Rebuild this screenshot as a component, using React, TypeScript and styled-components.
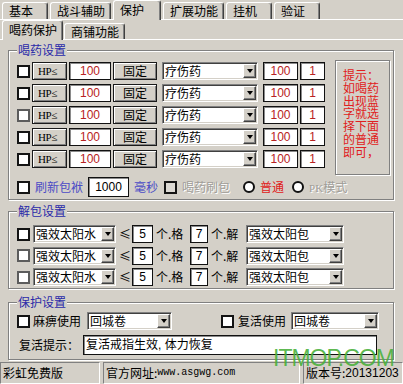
import React from 'react';
import styled, { createGlobalStyle } from 'styled-components';

const BG = '#d4d0c8';
const CJK = `"Noto Sans CJK SC", "Noto Sans", sans-serif`;
const LAT = `"Liberation Sans", "Noto Sans CJK SC", sans-serif`;

const GlobalStyle = createGlobalStyle`
  html, body { margin: 0; padding: 0; background: ${BG}; }
  body { font-family: ${CJK}; font-size: 12px; }
  *, *::before, *::after { box-sizing: border-box; }
`;

const Window = styled.div`
  position: relative;
  width: 403px;
  height: 384px;
  overflow: hidden;
  background: ${BG};
  display: flex;
  flex-direction: column;
  font-family: ${CJK};
  font-size: 12px;
  color: #000;
`;

const TabStrip = styled.div<{ $gap: number }>`
  position: relative;
  z-index: 1;
  flex: none;
  display: flex;
  align-items: flex-end;
  height: 19px;
  padding-left: 2px;
  gap: ${(p) => p.$gap}px;
`;

const Tab = styled.div<{ $active?: boolean; $h: number }>`
  flex: none;
  height: ${(p) => (p.$active ? 20 : p.$h)}px;
  margin-bottom: ${(p) => (p.$active ? -1 : 0)}px;
  min-width: ${(p) => (p.$active ? 48 : 46)}px;
  padding: 0 5px ${(p) => (p.$active ? 2 : 0)}px 6px;
  display: flex;
  align-items: center;
  background: ${BG};
  border-top: 1px solid #fff;
  border-left: 1px solid #fff;
  border-right: 1px solid #404040;
  box-shadow: inset -1px 0 0 #808080;
  border-radius: 3px 3px 0 0;
  line-height: 14px;
  white-space: nowrap;
`;

const TabPanel = styled.div`
  flex: 1;
  display: flex;
  flex-direction: column;
  border-top: 1px solid #fff;
  min-height: 0;
`;

const PanelBody = styled.div`
  flex: 1;
  display: flex;
  flex-direction: column;
  padding: 0 9px 0 8px;
  border-top: 1px solid #fff;
`;

const Group = styled.fieldset<{ $mt: number; $pt: number; $pb: number }>`
  margin: ${(p) => p.$mt}px 0 0 0;
  padding: ${(p) => p.$pt}px 3px ${(p) => p.$pb}px 8px;
  border: 1px solid #808080;
  box-shadow: inset 1px 1px 0 #fff, 1px 1px 0 #fff;
  min-inline-size: 0;
`;

const Legend = styled.legend`
  padding: 0 1px;
  margin: 0;
  line-height: 14px;
  color: #2a2aa8;
  background: ${BG};
`;

const DrinkBody = styled.div`
  display: grid;
  grid-template-columns: auto 55px;
  column-gap: 10px;
  justify-content: start;
`;

const RowsCol = styled.div`
  display: flex;
  flex-direction: column;
  gap: 4px;
  padding-top: 2px;
`;

const Row = styled.div<{ $gap?: number; $h?: number; $mt?: number }>`
  display: flex;
  align-items: center;
  height: ${(p) => p.$h ?? 18}px;
  margin-top: ${(p) => p.$mt ?? 0}px;
  gap: ${(p) => p.$gap ?? 2}px;
`;

const RowStack = styled.div<{ $gap: number }>`
  display: flex;
  flex-direction: column;
  gap: ${(p) => p.$gap}px;
`;

const Check = styled.span<{ $tone?: 'dark' | 'mid'; $disabled?: boolean; $ml?: number }>`
  flex: none;
  width: 13px;
  height: 13px;
  margin-left: ${(p) => p.$ml ?? 0}px;
  background: ${(p) => (p.$disabled ? '#dcd9d3' : '#fff')};
  border: 2px solid ${(p) => (p.$tone === 'mid' ? '#5c5c5c' : '#141414')};
`;

const Radio = styled.span<{ $ml?: number }>`
  flex: none;
  width: 12px;
  height: 12px;
  margin-left: ${(p) => p.$ml ?? 0}px;
  border-radius: 50%;
  border: 2px solid #111;
  background: #fff;
`;

const Btn = styled.div<{ $w: number }>`
  flex: none;
  width: ${(p) => p.$w}px;
  height: 18px;
  display: flex;
  align-items: center;
  justify-content: center;
  background: ${BG};
  border: 1px solid #1a1a1a;
  box-shadow: inset 1px 1px 0 #fff, inset -1px -1px 0 #808080;
  line-height: 14px;
`;

const HpLabel = styled.span`
  font-family: "Liberation Serif", serif;
  font-size: 11px;
  letter-spacing: -0.3px;
  padding-right: 4px;
`;

const Field = styled.div<{ $w: number; $h?: number; $color?: string; $left?: boolean }>`
  flex: none;
  width: ${(p) => p.$w}px;
  height: ${(p) => p.$h ?? 18}px;
  display: flex;
  align-items: center;
  justify-content: ${(p) => (p.$left ? 'flex-start' : 'center')};
  padding: 0 2px;
  background: #fff;
  border: 1px solid #111;
  box-shadow: inset 1px 1px 0 #8a8a8a;
  font-family: ${LAT};
  font-size: 12px;
  line-height: 14px;
  color: ${(p) => p.$color ?? '#000'};
  white-space: nowrap;
`;

const Combo = styled.div<{ $w: number; $mx?: number; $ml?: number }>`
  flex: none;
  width: ${(p) => p.$w}px;
  height: 18px;
  margin: 0 ${(p) => p.$mx ?? 0}px 0 ${(p) => p.$ml ?? p.$mx ?? 0}px;
  display: flex;
  align-items: center;
  padding: 0 1px 0 2px;
  background: #fff;
  border: 1px solid;
  border-color: #808080 #fff #fff #808080;
  box-shadow: inset 1px 1px 0 #404040, inset -1px -1px 0 ${BG};
`;

const ComboText = styled.span`
  flex: 1;
  line-height: 14px;
  white-space: nowrap;
`;

const DropBtn = styled.span`
  flex: none;
  width: 13px;
  height: 14px;
  display: flex;
  align-items: center;
  justify-content: center;
  background: ${BG};
  border: 1px solid;
  border-color: #fff #404040 #404040 #fff;
  box-shadow: inset -1px -1px 0 #808080;
  &::after {
    content: '';
    width: 0;
    height: 0;
    border-left: 3.5px solid transparent;
    border-right: 3.5px solid transparent;
    border-top: 4px solid #000;
  }
`;

const TipBox = styled.div`
  height: 115px;
  padding: 8px 0 0 7px;
  border: 1px solid #808080;
  box-shadow: inset 1px 1px 0 #fff, 1px 1px 0 #fff;
  color: #e02020;
  line-height: 12.8px;
  font-size: 12px;
`;

const TipLine = styled.div`
  white-space: nowrap;
`;

const Label = styled.span<{ $tone?: 'blue' | 'red' | 'gray' | 'black'; $w?: number; $ml?: number }>`
  flex: none;
  width: ${(p) => (p.$w ? `${p.$w}px` : 'auto')};
  margin-left: ${(p) => p.$ml ?? 0}px;
  line-height: 14px;
  white-space: nowrap;
  color: ${(p) =>
    p.$tone === 'blue' ? '#4b4bc6' : p.$tone === 'red' ? '#e02020' : p.$tone === 'gray' ? '#a09d98' : '#000'};
  text-shadow: ${(p) => (p.$tone === 'gray' ? '1px 1px 0 #fff' : 'none')};
`;

const SerifBit = styled.span`
  font-family: "Liberation Serif", serif;
  font-size: 11px;
`;

const Sym = styled.span`
  flex: none;
  width: 10px;
  text-align: center;
  line-height: 14px;
`;

const StatusBar = styled.div`
  flex: none;
  display: flex;
  gap: 3px;
  height: 22px;
`;

const StatusPanel = styled.div<{ $w: number }>`
  flex: none;
  width: ${(p) => p.$w}px;
  display: flex;
  align-items: center;
  padding: 0 0 0 2px;
  border-top: 1px solid #808080;
  border-left: 1px solid #808080;
  border-bottom: 1px solid #fff;
  border-right: 1px solid #fff;
  line-height: 14px;
  white-space: nowrap;
`;

const Mono = styled.span`
  font-family: "Liberation Mono", monospace;
  font-size: 10px;
`;

const Digits = styled.span`
  font-family: "Liberation Sans", sans-serif;
  font-size: 12px;
`;

const Watermark = styled.div`
  position: absolute;
  left: 273px;
  top: 347px;
  font-family: "Liberation Sans", sans-serif;
  font-size: 23px;
  letter-spacing: -1px;
  line-height: 1;
  color: rgba(72, 176, 58, 0.9);
  pointer-events: none;
`;

const outerTabs = ['基本', '战斗辅助', '保护', '扩展功能', '挂机', '验证'];
const innerTabs = ['喝药保护', '商铺功能'];
const drinkTones: Array<'dark' | 'mid'> = ['dark', 'dark', 'mid', 'dark', 'dark'];
const tipLines = ['提示：', '如喝药', '出现蓝', '字就选', '择下面', '的普通', '即可，'];
const unpackTones: Array<'dark' | 'mid'> = ['dark', 'mid', 'mid'];

export default function App() {
  return (
    <>
      <GlobalStyle />
      <Window>
        <TabStrip $gap={2}>
          {outerTabs.map((t) => (
            <Tab key={t} $h={17} $active={t === '保护'}>
              {t}
            </Tab>
          ))}
        </TabStrip>
        <TabPanel>
          <TabStrip $gap={1}>
            {innerTabs.map((t) => (
              <Tab key={t} $h={16} $active={t === '喝药保护'}>
                {t}
              </Tab>
            ))}
          </TabStrip>
          <PanelBody>
            <Group $mt={3} $pt={3} $pb={2}>
              <Legend>喝药设置</Legend>
              <DrinkBody>
                <RowsCol>
                  {drinkTones.map((tone, i) => (
                    <Row key={i}>
                      <Check $tone={tone} />
                      <Btn $w={35}>
                        <HpLabel>HP≤</HpLabel>
                      </Btn>
                      <Field $w={42} $color="#b82222">100</Field>
                      <Btn $w={44}>固定</Btn>
                      <Combo $w={96} $mx={3}>
                        <ComboText>疗伤药</ComboText>
                        <DropBtn />
                      </Combo>
                      <Field $w={35} $color="#b82222">100</Field>
                      <Field $w={25} $color="#b82222">1</Field>
                    </Row>
                  ))}
                </RowsCol>
                <TipBox>
                  {tipLines.map((l) => (
                    <TipLine key={l}>{l}</TipLine>
                  ))}
                </TipBox>
              </DrinkBody>
              <Row $h={20} $gap={5} $mt={2}>
                <Check />
                <Label $tone="blue">刷新包袱</Label>
                <Field $w={41} $h={20}>1000</Field>
                <Label $tone="blue">毫秒</Label>
                <Check $disabled $ml={1} />
                <Label $tone="gray">喝药刷包</Label>
                <Radio $ml={8} />
                <Label $tone="red">普通</Label>
                <Radio $ml={3} />
                <Label $tone="gray">
                  <SerifBit>PK</SerifBit>模式
                </Label>
              </Row>
            </Group>

            <Group $mt={4} $pt={7} $pb={2}>
              <Legend>解包设置</Legend>
              <RowStack $gap={3.5}>
                {unpackTones.map((tone, i) => (
                  <Row key={i} $gap={3}>
                    <Check $tone={tone} />
                    <Combo $w={83}>
                      <ComboText>强效太阳水</ComboText>
                      <DropBtn />
                    </Combo>
                    <Sym>≤</Sym>
                    <Field $w={21}>5</Field>
                    <Label $w={31}>个.格</Label>
                    <Field $w={18}>7</Field>
                    <Label $w={32}>个.解</Label>
                    <Combo $w={98}>
                      <ComboText>强效太阳包</ComboText>
                      <DropBtn />
                    </Combo>
                  </Row>
                ))}
              </RowStack>
            </Group>

            <Group $mt={6} $pt={3} $pb={4}>
              <Legend>保护设置</Legend>
              <RowStack $gap={5}>
                <Row $gap={3}>
                  <Check />
                  <Label>麻痹使用</Label>
                  <Combo $w={85} $ml={3}>
                    <ComboText>回城卷</ComboText>
                    <DropBtn />
                  </Combo>
                  <Check $ml={46} />
                  <Label $ml={1}>复活使用</Label>
                  <Combo $w={88} $ml={2}>
                    <ComboText>回城卷</ComboText>
                    <DropBtn />
                  </Combo>
                </Row>
                <Row $h={20} $gap={4}>
                  <Label $ml={2}>复活提示：</Label>
                  <Field $w={294} $h={20} $left>
                    复活戒指生效, 体力恢复
                  </Field>
                </Row>
              </RowStack>
            </Group>
          </PanelBody>
        </TabPanel>
        <StatusBar>
          <StatusPanel $w={100}>彩虹免费版</StatusPanel>
          <StatusPanel $w={197}>
            官方网址:<Mono>www.asgwg.com</Mono>
          </StatusPanel>
          <StatusPanel $w={100}>
            版本号:<Digits>20131203</Digits>
          </StatusPanel>
        </StatusBar>
        <Watermark>ITMOP.COM</Watermark>
      </Window>
    </>
  );
}
